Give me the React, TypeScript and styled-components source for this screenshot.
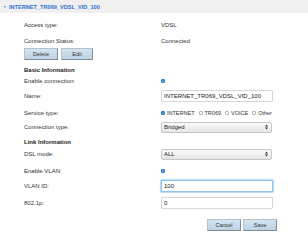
import * as React from 'react'
import styled, { createGlobalStyle } from 'styled-components'

const GlobalStyle = createGlobalStyle`
  html, body {
    margin: 0;
    padding: 0;
    background: #ffffff;
  }
  body {
    font-family: 'Liberation Sans', Arial, Helvetica, sans-serif;
    font-size: 6px;
    color: #333333;
  }
`

const Panel = styled.div`
  width: 308px;
  height: 240px;
  overflow: hidden;
  box-sizing: border-box;
`

const Header = styled.div`
  height: 13px;
  background: #f0f0f0;
  display: flex;
  align-items: center;
  padding-left: 4px;
  gap: 3px;
`

const Caret = styled.span`
  width: 0;
  height: 0;
  border-left: 1.5px solid transparent;
  border-right: 1.5px solid transparent;
  border-top: 2px solid #3f7fd0;
`

const Title = styled.span`
  color: #2f73d0;
  font-weight: bold;
  font-size: 5.6px;
`

const Body = styled.div`
  padding-left: 24px;
  padding-right: 31px;
  display: flex;
  flex-direction: column;
`

const Row = styled.div<{ $h?: number; $mt?: number }>`
  display: flex;
  align-items: center;
  height: ${(p) => p.$h ?? 12}px;
  margin-top: ${(p) => p.$mt ?? 0}px;
`

const Label = styled.div`
  width: 137px;
  flex-shrink: 0;
`

const Value = styled.div`
  display: flex;
  align-items: center;
`

const Section = styled.div<{ $mt?: number }>`
  height: 12px;
  margin-top: ${(p) => p.$mt ?? 0}px;
  display: flex;
  align-items: center;
  font-weight: bold;
  color: #222222;
`

const Button = styled.button<{ $w?: number }>`
  width: ${(p) => p.$w ?? 34}px;
  height: 12px;
  padding: 0;
  font-family: inherit;
  font-size: 5.5px;
  color: #333333;
  background: linear-gradient(#d4e4f0, #bcd2e4);
  border: 1px solid #b3c2ce;
  border-right-color: #7f8c96;
  border-bottom-color: #7f8c96;
  border-radius: 1px;
`

const ButtonGroup = styled.div`
  display: flex;
  gap: 3px;
`

const Footer = styled.div`
  display: flex;
  justify-content: flex-end;
  gap: 2px;
  height: 12px;
  margin-top: 10px;
`

const TextInput = styled.div<{ $focus?: boolean }>`
  width: 112px;
  height: 12px;
  box-sizing: border-box;
  border: 1px solid ${(p) => (p.$focus ? '#8ec3ee' : '#d6d6d6')};
  box-shadow: ${(p) => (p.$focus ? '0 0 1px 0.5px #b9dbf6' : 'none')};
  border-radius: 1px;
  background: #ffffff;
  display: flex;
  align-items: center;
  padding-left: 2px;
  color: #222222;
`

const Select = styled.div`
  width: 111px;
  height: 11px;
  box-sizing: border-box;
  border: 1px solid #c6c6c6;
  border-radius: 2px;
  background: linear-gradient(#fafafa, #e6e6e6);
  display: flex;
  align-items: center;
  justify-content: space-between;
  padding: 0 3px 0 2px;
  color: #222222;
`

const Box = styled.span<{ $checked?: boolean }>`
  width: 4px;
  height: 4px;
  border-radius: 1px;
  box-sizing: border-box;
  background: ${(p) => (p.$checked ? '#3d8de6' : '#ffffff')};
  border: 0.6px solid ${(p) => (p.$checked ? '#2d77cc' : '#b4b4b4')};
  display: inline-flex;
  align-items: center;
  justify-content: center;
  margin-right: 2px;
`

const Option = styled.span`
  display: inline-flex;
  align-items: center;
  margin-right: 4px;
  font-size: 5.5px;
`

const Checkbox: React.FC<{ checked?: boolean }> = ({ checked }) => (
  <Box $checked={checked}>
    {checked && (
      <svg width="3" height="3" viewBox="0 0 6 6">
        <path d="M1 3.2 L2.5 4.6 L5 1.4" stroke="#fff" strokeWidth="1.2" fill="none" />
      </svg>
    )}
  </Box>
)

const Arrows = () => (
  <svg width="3" height="6" viewBox="0 0 3 6">
    <path d="M0 2.4 L1.5 0.6 L3 2.4 Z" fill="#333" />
    <path d="M0 3.6 L1.5 5.4 L3 3.6 Z" fill="#333" />
  </svg>
)

const services = [
  { name: 'INTERNET', checked: true },
  { name: 'TR069', checked: false },
  { name: 'VOICE', checked: false },
  { name: 'Other', checked: false },
]

export default function App() {
  return (
    <Panel>
      <GlobalStyle />
      <Header>
        <Caret />
        <Title>INTERNET_TR069_VDSL_VID_100</Title>
      </Header>
      <Body>
        <Row $h={14} $mt={5}>
          <Label>Access type:</Label>
          <Value>VDSL</Value>
        </Row>
        <Row $h={14} $mt={2}>
          <Label>Connection Status:</Label>
          <Value>Connected</Value>
        </Row>
        <ButtonGroup>
          <Button>Delete</Button>
          <Button $w={32}>Edit</Button>
        </ButtonGroup>
        <Section $mt={4}>Basic Information</Section>
        <Row $h={10}>
          <Label>Enable connection:</Label>
          <Value>
            <Checkbox checked />
          </Value>
        </Row>
        <Row $h={13} $mt={3}>
          <Label>Name:</Label>
          <TextInput>INTERNET_TR069_VDSL_VID_100</TextInput>
        </Row>
        <Row $mt={5}>
          <Label>Service type:</Label>
          <Value>
            {services.map((s) => (
              <Option key={s.name}>
                <Checkbox checked={s.checked} />
                {s.name}
              </Option>
            ))}
          </Value>
        </Row>
        <Row $mt={2}>
          <Label>Connection type:</Label>
          <Select>
            <span>Bridged</span>
            <Arrows />
          </Select>
        </Row>
        <Section $mt={3}>Link Information</Section>
        <Row>
          <Label>DSL mode:</Label>
          <Select>
            <span>ALL</span>
            <Arrows />
          </Select>
        </Row>
        <Row $mt={5}>
          <Label>Enable VLAN:</Label>
          <Value>
            <Checkbox checked />
          </Value>
        </Row>
        <Row $mt={3}>
          <Label>VLAN ID:</Label>
          <TextInput $focus>100</TextInput>
        </Row>
        <Row $mt={5}>
          <Label>802.1p:</Label>
          <TextInput>0</TextInput>
        </Row>
        <Footer>
          <Button>Cancel</Button>
          <Button>Save</Button>
        </Footer>
      </Body>
    </Panel>
  )
}
